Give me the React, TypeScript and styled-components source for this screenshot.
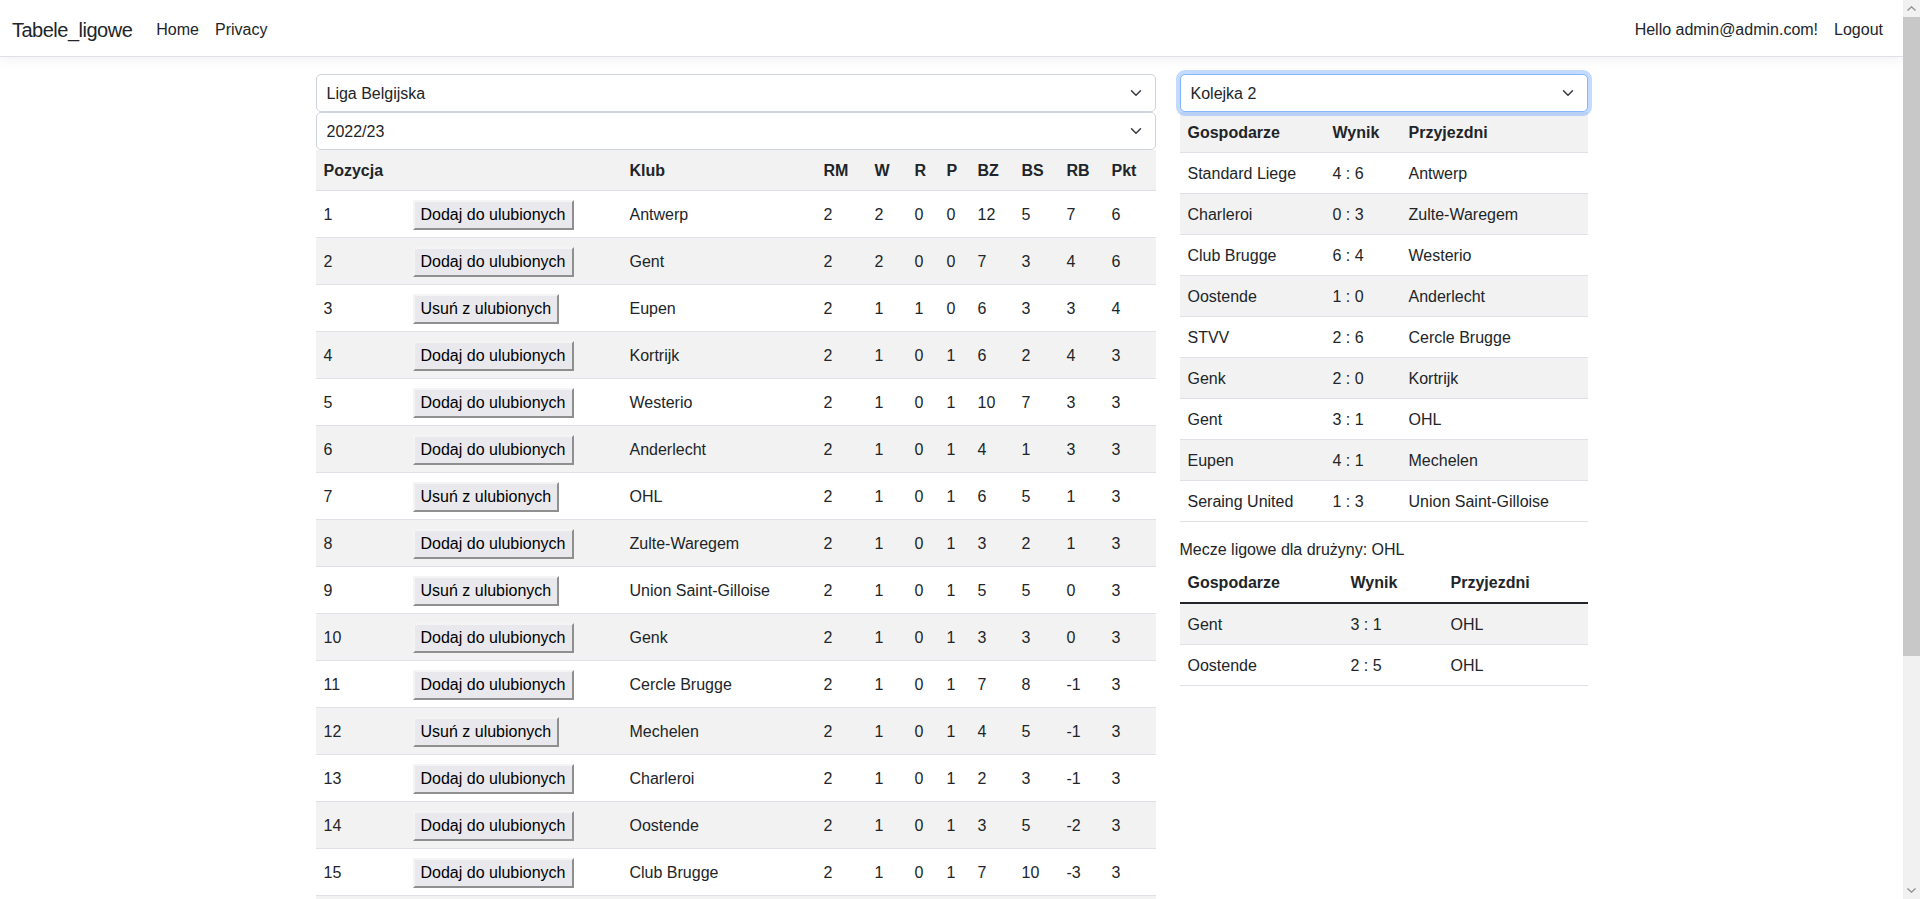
import styled, { createGlobalStyle, css } from "styled-components";

const GlobalStyle = createGlobalStyle`
  *, *::before, *::after { box-sizing: border-box; }
  body {
    margin: 0 17px 0 0;
    font-family: "Liberation Sans", Arial, sans-serif;
    font-size: 16px;
    line-height: 1.5;
    color: #212529;
    background: #fff;
  }
`;

const Navbar = styled.header`
  display: flex;
  align-items: center;
  justify-content: space-between;
  padding: 10px 12px 6px;
  border-bottom: 1px solid #dee2e6;
  box-shadow: 0 4px 12px rgba(0, 0, 0, 0.05);
  margin-bottom: 17px;
`;

const NavGroup = styled.nav`
  display: flex;
  align-items: center;
`;

const Brand = styled.a`
  font-size: 20px;
  line-height: 30px;
  padding: 5px 0;
  margin-right: 16px;
  letter-spacing: -0.5px;
  color: #212529;
  text-decoration: none;
`;

const NavLink = styled.a`
  display: block;
  padding: 8px;
  color: #212529;
  text-decoration: none;
`;

const LinkButton = styled.button`
  display: block;
  padding: 8px;
  border: 0;
  background: none;
  font: inherit;
  color: #212529;
  cursor: pointer;
`;

const Main = styled.main`
  width: 1272px;
  margin: 0 auto;
  padding-bottom: 16px;
  display: grid;
  grid-template-columns: 840px 408px;
  column-gap: 24px;
  align-items: start;
`;

const Column = styled.div`
  display: flex;
  flex-direction: column;
`;

const SelectWrap = styled.div`
  position: relative;
`;

const Select = styled.select<{ $focused?: boolean }>`
  display: block;
  width: 100%;
  appearance: none;
  padding: 7px 36px 5px 10px;
  font: inherit;
  line-height: 24px;
  color: #212529;
  background: #fff;
  border: 1px solid #ced4da;
  border-radius: 5px;
  outline: 0;
  ${(p) =>
    p.$focused &&
    css`
      border-color: #86b7fe;
      box-shadow: 0 0 0 4px rgba(13, 110, 253, 0.25);
    `}
`;

const Chevron = styled.svg`
  position: absolute;
  right: 14px;
  top: 50%;
  transform: translateY(-50%);
  pointer-events: none;
`;

const Table = styled.table`
  width: 100%;
  border-collapse: collapse;
  table-layout: fixed;
  margin-bottom: 16px;
  vertical-align: top;

  tbody tr:nth-of-type(odd) > * {
    background: #f2f2f2;
  }
`;

const Col = styled.col<{ $w: number }>`
  width: ${(p) => p.$w}px;
`;

const Th = styled.th<{ $dark?: boolean }>`
  padding: 9px 8px 7px;
  text-align: left;
  font-weight: 700;
  border-bottom: ${(p) => (p.$dark ? "2px solid #212529" : "1px solid #dee2e6")};
  white-space: nowrap;
`;

const Td = styled.td`
  padding: 9px 8px 7px;
  text-align: left;
  border-bottom: 1px solid #dee2e6;
  white-space: nowrap;
`;

const FavButton = styled.button`
  font: inherit;
  line-height: 24px;
  padding: 1px 6px;
  color: #000;
  background: #e9e9ed;
  border-width: 2px;
  border-style: solid;
  border-color: #f4f4f4 #8f8f8f #8f8f8f #f4f4f4;
  border-radius: 0;
  cursor: pointer;
`;

const Caption = styled.p`
  margin: 0;
`;

const Footer = styled.footer`
  border-top: 1px solid #dee2e6;
  color: #6c757d;
  line-height: 60px;
  padding: 0 12px;
  margin-top: 80px;
`;

/* the window's own scrollbar, as it shows in the screenshot */
const Scrollbar = styled.div`
  position: fixed;
  top: 0;
  right: 0;
  width: 17px;
  height: 100vh;
  background: #f1f1f1;
  display: flex;
  flex-direction: column;
`;

const ScrollArrow = styled.div`
  height: 17px;
  display: flex;
  align-items: center;
  justify-content: center;
`;

const ScrollThumb = styled.div`
  height: 639px;
  background: #c8c8c8;
`;

const ScrollTrack = styled.div`
  flex: 1;
`;

type Team = [number, boolean, string, number, number, number, number, number, number, number, number];

const teams: Team[] = [
  [1, false, "Antwerp", 2, 2, 0, 0, 12, 5, 7, 6],
  [2, false, "Gent", 2, 2, 0, 0, 7, 3, 4, 6],
  [3, true, "Eupen", 2, 1, 1, 0, 6, 3, 3, 4],
  [4, false, "Kortrijk", 2, 1, 0, 1, 6, 2, 4, 3],
  [5, false, "Westerio", 2, 1, 0, 1, 10, 7, 3, 3],
  [6, false, "Anderlecht", 2, 1, 0, 1, 4, 1, 3, 3],
  [7, true, "OHL", 2, 1, 0, 1, 6, 5, 1, 3],
  [8, false, "Zulte-Waregem", 2, 1, 0, 1, 3, 2, 1, 3],
  [9, true, "Union Saint-Gilloise", 2, 1, 0, 1, 5, 5, 0, 3],
  [10, false, "Genk", 2, 1, 0, 1, 3, 3, 0, 3],
  [11, false, "Cercle Brugge", 2, 1, 0, 1, 7, 8, -1, 3],
  [12, true, "Mechelen", 2, 1, 0, 1, 4, 5, -1, 3],
  [13, false, "Charleroi", 2, 1, 0, 1, 2, 3, -1, 3],
  [14, false, "Oostende", 2, 1, 0, 1, 3, 5, -2, 3],
  [15, false, "Club Brugge", 2, 1, 0, 1, 7, 10, -3, 3],
  [16, false, "Standard Liege", 2, 0, 1, 1, 5, 7, -2, 1],
  [17, false, "STVV", 2, 0, 0, 2, 3, 8, -5, 0],
  [18, false, "Seraing United", 2, 0, 0, 2, 1, 6, -5, 0],
];

const leagueHead = ["Pozycja", "", "Klub", "RM", "W", "R", "P", "BZ", "BS", "RB", "Pkt"];
const leagueCols = [89, 217, 194, 51, 40, 32, 31, 44, 45, 45, 52];

const round: [string, string, string][] = [
  ["Standard Liege", "4 : 6", "Antwerp"],
  ["Charleroi", "0 : 3", "Zulte-Waregem"],
  ["Club Brugge", "6 : 4", "Westerio"],
  ["Oostende", "1 : 0", "Anderlecht"],
  ["STVV", "2 : 6", "Cercle Brugge"],
  ["Genk", "2 : 0", "Kortrijk"],
  ["Gent", "3 : 1", "OHL"],
  ["Eupen", "4 : 1", "Mechelen"],
  ["Seraing United", "1 : 3", "Union Saint-Gilloise"],
];

const teamMatches: [string, string, string][] = [
  ["Gent", "3 : 1", "OHL"],
  ["Oostende", "2 : 5", "OHL"],
];

const matchHead = ["Gospodarze", "Wynik", "Przyjezdni"];

function Dropdown({ value, options, focused }: { value: string; options: string[]; focused?: boolean }) {
  return (
    <SelectWrap>
      <Select $focused={focused} defaultValue={value}>
        {options.map((o) => (
          <option key={o}>{o}</option>
        ))}
      </Select>
      <Chevron width="12" height="12" viewBox="0 0 16 16">
        <path d="m2 5 6 6 6-6" fill="none" stroke="#343a40" strokeWidth="2" strokeLinecap="round" strokeLinejoin="round" />
      </Chevron>
    </SelectWrap>
  );
}

function MatchRows({ rows }: { rows: [string, string, string][] }) {
  return (
    <>
      {rows.map(([home, score, away]) => (
        <tr key={home}>
          <Td>{home}</Td>
          <Td>{score}</Td>
          <Td>{away}</Td>
        </tr>
      ))}
    </>
  );
}

export default function App() {
  return (
    <>
      <GlobalStyle />
      <Navbar>
        <NavGroup>
          <Brand href="#">Tabele_ligowe</Brand>
          <NavLink href="#">Home</NavLink>
          <NavLink href="#">Privacy</NavLink>
        </NavGroup>
        <NavGroup>
          <NavLink href="#">Hello admin@admin.com!</NavLink>
          <LinkButton type="button">Logout</LinkButton>
        </NavGroup>
      </Navbar>
      <Main>
        <Column>
          <Dropdown value="Liga Belgijska" options={["Liga Belgijska", "Premier League", "La Liga"]} />
          <Dropdown value="2022/23" options={["2022/23", "2021/22"]} />
          <Table>
            <colgroup>
              {leagueCols.map((w, i) => (
                <Col key={i} $w={w} />
              ))}
            </colgroup>
            <tbody>
              <tr>
                {leagueHead.map((h, i) => (
                  <Th key={i}>{h}</Th>
                ))}
              </tr>
              {teams.map(([pos, fav, name, ...nums]) => (
                <tr key={pos}>
                  <Td>{pos}</Td>
                  <Td>
                    <FavButton type="button">{fav ? "Usuń z ulubionych" : "Dodaj do ulubionych"}</FavButton>
                  </Td>
                  <Td>{name}</Td>
                  {nums.map((n, i) => (
                    <Td key={i}>{n}</Td>
                  ))}
                </tr>
              ))}
            </tbody>
          </Table>
        </Column>
        <Column>
          <Dropdown value="Kolejka 2" options={["Kolejka 1", "Kolejka 2", "Kolejka 3"]} focused />
          <Table>
            <colgroup>
              <Col $w={145} />
              <Col $w={76} />
              <Col $w={187} />
            </colgroup>
            <tbody>
              <tr>
                {matchHead.map((h) => (
                  <Th key={h}>{h}</Th>
                ))}
              </tr>
              <MatchRows rows={round} />
            </tbody>
          </Table>
          <Caption>Mecze ligowe dla drużyny: OHL</Caption>
          <Table>
            <colgroup>
              <Col $w={163} />
              <Col $w={100} />
              <Col $w={145} />
            </colgroup>
            <thead>
              <tr>
                {matchHead.map((h) => (
                  <Th key={h} $dark>
                    {h}
                  </Th>
                ))}
              </tr>
            </thead>
            <tbody>
              <MatchRows rows={teamMatches} />
            </tbody>
          </Table>
        </Column>
      </Main>
      <Footer>&copy; 2023 - Tabele_ligowe - Privacy</Footer>
      <Scrollbar>
        <ScrollArrow>
          <svg width="9" height="5" viewBox="0 0 9 5">
            <path d="M0.5 4.5 4.5 0.8 8.5 4.5" fill="none" stroke="#8a8a8a" strokeWidth="1.2" />
          </svg>
        </ScrollArrow>
        <ScrollThumb />
        <ScrollTrack />
        <ScrollArrow>
          <svg width="9" height="5" viewBox="0 0 9 5">
            <path d="M0.5 0.5 4.5 4.2 8.5 0.5" fill="none" stroke="#8a8a8a" strokeWidth="1.2" />
          </svg>
        </ScrollArrow>
      </Scrollbar>
    </>
  );
}
